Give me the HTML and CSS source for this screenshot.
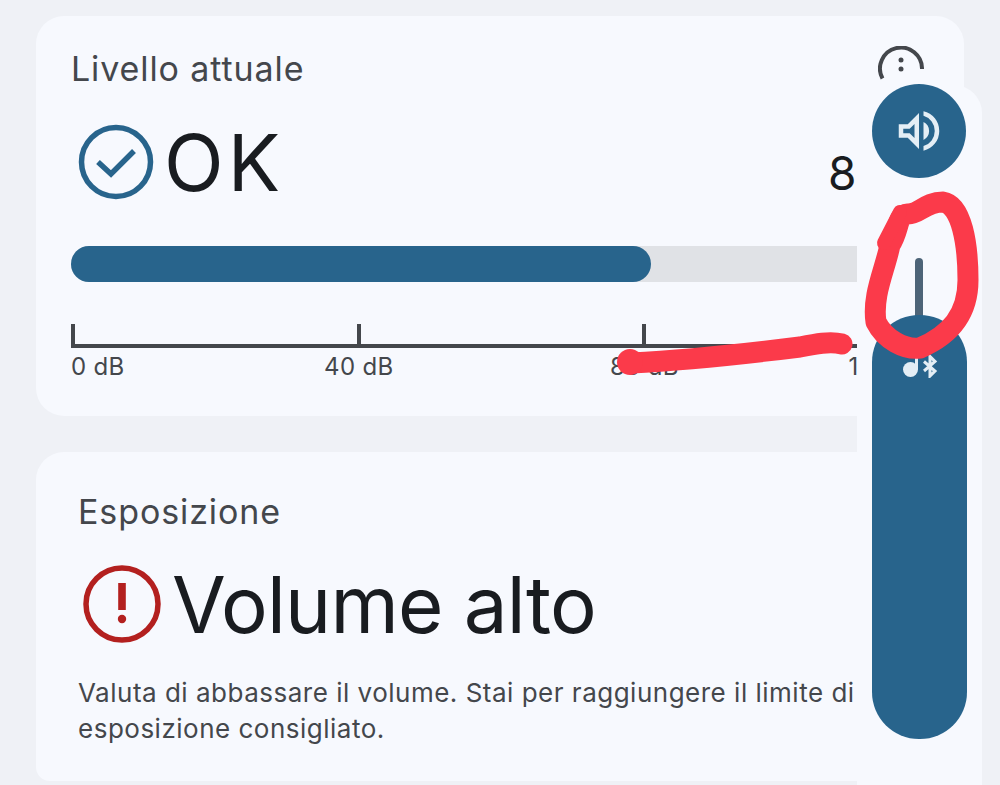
FILE: index.html
```html
<!DOCTYPE html>
<html lang="it">
<head>
<meta charset="UTF-8">
<meta name="viewport" content="width=device-width, initial-scale=1.0">
<title>Livello attuale</title>
<link rel="stylesheet" href="styles.css">
</head>
<body>
    <div class="page">
        <!-- livello attuale -->
        <section class="card level-card">
            <div class="card-head">
                <h2 class="card-title">Livello attuale</h2>
                <svg class="info-icon" viewBox="0 0 46 46">
                    <path d="M4.5 32.5 A21 21 0 1 1 44 23" fill="none" stroke="#44474c" stroke-width="4"/>
                    <circle cx="23" cy="14" r="2.5" fill="#44474c"/>
                    <circle cx="23" cy="23" r="2.5" fill="#44474c"/>
                </svg>
            </div>
            <div class="status-row">
                <svg class="status-icon" viewBox="0 0 76 76">
                    <circle cx="38" cy="38" r="34.5" fill="none" stroke="#28648c" stroke-width="5.5"/>
                    <path d="M20 38 L33 50 L56 27" fill="none" stroke="#28648c" stroke-width="5.5"/>
                </svg>
                <span class="status-text short">OK</span>
            </div>
            <div class="meter">
                <div class="meter-fill"></div>
            </div>
            <div class="scale">
                <div class="scale-item"><span class="tick"></span><span class="scale-label">0 dB</span></div>
                <div class="scale-item center"><span class="tick"></span><span class="scale-label">40 dB</span></div>
                <div class="scale-item center"><span class="tick"></span><span class="scale-label">80 dB</span></div>
                <div class="scale-item last"><span class="tick"></span><span class="scale-label">120 dB</span></div>
            </div>
        </section>

        <!-- esposizione -->
        <section class="card exposure-card">
            <h2 class="card-title">Esposizione</h2>
            <div class="status-row">
                <svg class="status-icon alert" viewBox="0 0 80 80">
                    <circle cx="40" cy="40" r="36" fill="none" stroke="#b3201f" stroke-width="5.5"/>
                    <rect x="36.2" y="19" width="7.6" height="27" fill="#b3201f"/>
                    <circle cx="40" cy="55" r="4.2" fill="#b3201f"/>
                </svg>
                <span class="status-text long">Volume alto</span>
            </div>
            <p class="note">Valuta di abbassare il volume. Stai per raggiungere il limite di esposizione consigliato.</p>
        </section>
    </div>

    <!-- pannello volume sopra la pagina -->
    <aside class="volume-panel">
        <span class="reading">8</span>
        <div class="volume-button">
            <svg width="54" height="54" viewBox="0 -960 960 960">
                <path d="M560-131v-82q90-26 145-100t55-168q0-94-55-168T560-749v-82q124 28 202 125.5T840-481q0 127-78 224.5T560-131ZM120-360v-240h160l200-200v640L280-360H120Zm440 40V-642q47 22 73.5 66t26.5 96q0 51-26.5 94.5T560-320ZM400-606l-86 86H200v80h114l86 86v-252Z" fill="#e4eef5"/>
            </svg>
        </div>
        <div class="slider-stem"></div>
        <div class="slider-fill">
            <svg class="media-icon" width="36" height="24" viewBox="0 0 36 24">
                <circle cx="8.5" cy="15.5" r="7.5" fill="#e4eef5"/>
                <path d="M13 15 V2 H16 V15 Z" fill="#e4eef5"/>
                <path d="M22 7.5 L33 17 L28 22 V2.5 L33 7.5 L22 17" fill="none" stroke="#e4eef5" stroke-width="3"/>
            </svg>
        </div>
    </aside>

    <!-- segni a mano in rosso -->
    <svg class="scribble" width="1000" height="785" viewBox="0 0 1000 785">
        <path d="M908 214 C896 215 900 230 890 245 C885 270 872 295 876 322 C885 340 905 350 920 348 C950 335 968 315 968 280 C968 245 962 205 943 202 C925 202 920 214 908 214 Z" fill="none" stroke="#fb3a4a" stroke-width="21" stroke-linejoin="round"/>
        <path d="M884 243 L900 212" fill="none" stroke="#fb3a4a" stroke-width="14" stroke-linecap="round"/>
        <path d="M631 363 C690 360 760 352 800 347 C815 344 830 341 842 344" fill="none" stroke="#fb3a4a" stroke-width="21" stroke-linecap="round"/>
        <circle cx="630" cy="362" r="13" fill="#fb3a4a"/>
    </svg>
</body>
</html>
```

FILE: styles.css
```css
body {
    margin: 0;
    width: 1000px;
    height: 785px;
    overflow: hidden;
    position: relative;
    background-color: #eff1f6;
    color: #191c20;
    font-family: "Inter", "Noto Sans", sans-serif;
}
.page {
    display: flex;
    flex-direction: column;
    gap: 36px;
    padding: 16px 36px 0;
}
.card {
    background-color: #f7f9fe;
    border-radius: 28px;
}
.level-card {
    height: 400px;
    box-sizing: border-box;
    padding: 31px 32px 0 35px;
}
.exposure-card {
    height: 329px;
    box-sizing: border-box;
    padding: 38px 42px 0;
    border-radius: 28px 28px 14px 14px;
}
.card-head {
    display: flex;
    justify-content: space-between;
}
.card-title {
    margin: 0;
    font-size: 34px;
    font-weight: 400;
    line-height: 44px;
    letter-spacing: 0.9px;
    color: #44474c;
}
.info-icon {
    width: 46px;
    height: 46px;
    margin-top: -1px;
    margin-right: 8px;
}
.status-row {
    display: flex;
    align-items: center;
    gap: 10px;
    margin-top: 28px;
}
.status-icon {
    width: 76px;
    height: 76px;
    margin-left: 7px;
}
.status-icon.alert {
    width: 80px;
    height: 80px;
    margin-left: 4px;
}
.status-text {
    font-size: 78px;
    line-height: 80px;
    margin-top: 3px;
}
.status-text.short {
    letter-spacing: 4px;
}
.status-text.long {
    letter-spacing: -0.8px;
}
.meter {
    height: 36px;
    margin-top: 43px;
    background-color: #e0e2e6;
    border-radius: 18px;
}
.meter-fill {
    width: 580px;
    height: 100%;
    background-color: #28648c;
    border-radius: 18px;
}
.scale {
    display: flex;
    justify-content: space-between;
    margin-top: 62px;
    border-top: 4px solid #44474c;
}
.scale-item {
    width: 4px;
    position: relative;
}
.tick {
    display: block;
    position: absolute;
    left: 0;
    top: -24px;
    width: 4px;
    height: 24px;
    background-color: #44474c;
}
.scale-label {
    position: absolute;
    left: 0;
    top: 1px;
    white-space: nowrap;
    font-size: 24px;
    line-height: 36px;
    letter-spacing: 0.3px;
    color: #44474c;
}
.center .scale-label {
    transform: translateX(-47%);
}
.last .scale-label {
    left: auto;
    right: 5px;
}
.note {
    max-width: 790px;
    margin: 30px 0 0;
    font-size: 26px;
    line-height: 36px;
    letter-spacing: 0.5px;
    color: #44474c;
}
.volume-panel {
    position: absolute;
    left: 857px;
    top: 85px;
    width: 125px;
    height: 700px;
    display: flex;
    flex-direction: column;
    align-items: flex-start;
    background-color: #f7f9fe;
    border-top-right-radius: 28px;
    box-sizing: border-box;
    padding: 0 0 46px 15px;
}
.reading {
    position: absolute;
    left: -29px;
    top: 61px;
    font-size: 46px;
    line-height: 54px;
}
.volume-button {
    width: 94px;
    height: 94px;
    margin-top: -1px;
    flex-shrink: 0;
    display: flex;
    align-items: center;
    justify-content: center;
    border-radius: 50%;
    background-color: #28648c;
}
.slider-stem {
    width: 8px;
    height: 81px;
    margin: 80px 0 0 43px;
    background-color: #4d6478;
    border-radius: 4px 4px 0 0;
}
.slider-fill {
    width: 95px;
    flex: 1;
    margin-top: -24px;
    background-color: #28648c;
    border-radius: 47px;
    display: flex;
    justify-content: center;
    padding-top: 39px;
    box-sizing: border-box;
}
.media-icon {
    flex-shrink: 0;
}
.scribble {
    position: absolute;
    left: 0;
    top: 0;
    pointer-events: none;
}
```
